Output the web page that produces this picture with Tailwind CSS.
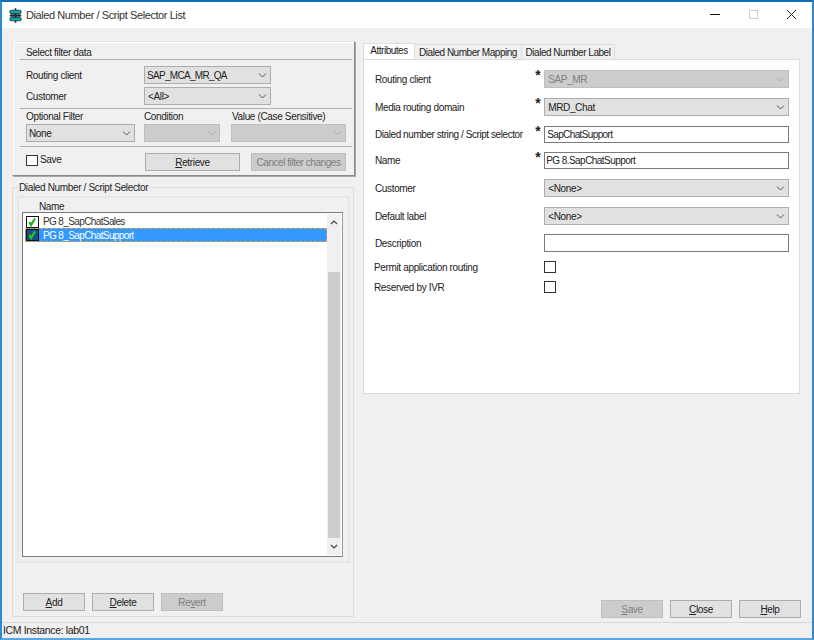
<!DOCTYPE html>
<html lang="en">
  <head>
    <meta charset="UTF-8" />
    <title>Dialed Number / Script Selector List</title>
    <script src="https://cdn.jsdelivr.net/npm/@tailwindcss/browser@4"></script>
  </head>
  <body class="w-[814px] h-[640px] overflow-hidden bg-[#f0f0f0] font-['Liberation_Sans',sans-serif] text-[10px] tracking-[-0.35px] whitespace-nowrap text-[#222]">
    <div class="w-[814px] h-[640px] flex flex-col border-x-2 border-b-2 border-t-2 border-x-[#2b8ad6] border-b-[#5aa6e0] border-t-[#0f6cb5]">
      <!-- title bar -->
      <div class="h-[26px] shrink-0 bg-white flex items-center pl-[7px]">
        <svg width="13" height="15" viewBox="0 0 16 18">
          <rect x="7" y="0" width="2" height="18" fill="#0d3b4a" />
          <rect x="1" y="2.5" width="14" height="4" rx="1.5" fill="#12a5a0" stroke="#0d3b4a" />
          <rect x="1" y="7.5" width="14" height="3" rx="1.5" fill="#1d2b3a" />
          <rect x="1" y="11.5" width="14" height="4" rx="1.5" fill="#12a5a0" stroke="#0d3b4a" />
        </svg>
        <span class="ml-[4px] text-[11px] tracking-[-0.42px] text-[#333]">Dialed Number / Script Selector List</span>
        <div class="ml-auto flex items-center">
          <svg width="38" height="14" viewBox="0 0 38 14"><rect x="14" y="6" width="10" height="1" fill="#111" /></svg>
          <svg width="38" height="14" viewBox="0 0 38 14"><rect x="15.500" y="2.500" width="8" height="8" fill="none" stroke="#d0d0d0" /></svg>
          <svg width="40" height="14" viewBox="0 0 40 14"><path d="M15 2l9 9M24 2l-9 9" stroke="#222" fill="none" /></svg>
        </div>
      </div>

      <div class="flex-1 flex min-h-0">
        <!-- left column -->
        <div class="w-[343px] ml-[10px] mt-[13px] shrink-0">
          <div class="h-[135px] border border-t-[#e8e8e8] border-l-[#e8e8e8] border-r-[#8a8a8a] border-b-[#8a8a8a] shadow-[inset_1px_1px_0_#fff,1px_1px_0_#a8a8a8] pt-[3px]">
            <div class="pl-[13px] h-[14px] leading-[16px]">Select filter data</div>
            <div class="h-px bg-[#b0b0b0] ml-[7px] mr-[2px]"></div>
            <div class="flex items-center h-[18px] mt-[6px] pl-[13px]">
              <span class="w-[118px]">Routing client</span>
              <div class="w-[127px] h-[18px] bg-[#e1e1e1] border border-[#adadad] flex items-center justify-between pl-[2px] pr-[3px]">
                <span class="tracking-[-0.7px]">SAP_MCA_MR_QA</span>
                <svg width="9" height="5" viewBox="0 0 9 5"><path d="M1 .5l3.500 3.500 3.500-3.500" fill="none" stroke="#555" /></svg>
              </div>
            </div>
            <div class="flex items-center h-[18px] mt-[3px] pl-[13px]">
              <span class="w-[118px]">Customer</span>
              <div class="w-[127px] h-[18px] bg-[#e1e1e1] border border-[#adadad] flex items-center justify-between pl-[3px] pr-[3px]">
                <span>&lt;All&gt;</span>
                <svg width="9" height="5" viewBox="0 0 9 5"><path d="M1 .5l3.500 3.500 3.500-3.500" fill="none" stroke="#555" /></svg>
              </div>
            </div>
            <div class="h-px bg-[#b0b0b0] ml-[7px] mr-[2px] mt-[3px]"></div>
            <div class="flex pl-[13px] h-[13px] leading-[15px]">
              <span class="w-[118px]">Optional Filter</span>
              <span class="w-[88px]">Condition</span>
              <span>Value (Case Sensitive)</span>
            </div>
            <div class="flex pl-[13px] h-[18px] mt-[2px]">
              <div class="w-[109px] bg-[#e1e1e1] border border-[#adadad] flex items-center justify-between pl-[2px] pr-[3px]">
                <span>None</span>
                <svg width="9" height="5" viewBox="0 0 9 5"><path d="M1 .5l3.500 3.500 3.500-3.500" fill="none" stroke="#555" /></svg>
              </div>
              <div class="w-[76px] ml-[9px] bg-[#cccccc] border border-[#bfbfbf] flex items-center justify-end pr-[3px]">
                <svg width="9" height="5" viewBox="0 0 9 5"><path d="M1 .5l3.500 3.500 3.500-3.500" fill="none" stroke="#aaa" /></svg>
              </div>
              <div class="w-[115px] ml-[11px] bg-[#cccccc] border border-[#bfbfbf] flex items-center justify-end pr-[3px]">
                <svg width="9" height="5" viewBox="0 0 9 5"><path d="M1 .5l3.500 3.500 3.500-3.500" fill="none" stroke="#aaa" /></svg>
              </div>
            </div>
            <div class="h-px bg-[#b0b0b0] ml-[7px] mr-[2px] mt-[4px]"></div>
            <div class="flex pl-[13px] mt-[6px] h-[18px]">
              <div class="w-[119px] flex items-start">
                <span class="w-[12px] h-[11px] mt-[2px] bg-white border border-[#333]"></span>
                <span class="ml-[2px] leading-[14px]">Save</span>
              </div>
              <div class="w-[95px] bg-[#e1e1e1] border border-[#adadad] flex items-center justify-center"><span><u>R</u>etrieve</span></div>
              <div class="w-[95px] ml-[11px] bg-[#cccccc] border border-[#bfbfbf] text-[#7f7f7f] tracking-[-0.45px] flex items-center justify-center">Cancel filter changes</div>
            </div>
          </div>

          <fieldset class="mt-[4px] h-[437px] border border-[#dcdcdc] w-[342px] pl-[4px] pr-[3px]">
            <legend class="ml-[1px] px-px h-[14px] leading-[16px]">Dialed Number / Script Selector</legend>
            <div class="h-[367px] mt-[2px] border-2 border-[#e6e6e6] pl-[3px] pr-[5px] pt-[2px]">
              <div class="pl-[17px] h-[12px] leading-[14px]">Name</div>
              <div class="h-[345px] w-[321px] border border-[#7a7a7a] border-r-[#999] bg-white flex pt-[2px] pl-[2px] pr-px tracking-[-0.62px]">
                <div class="flex-1">
                  <div class="h-[13px] flex items-center">
                    <svg class="ml-px" width="13" height="12" viewBox="0 0 13 12"><rect x=".5" y=".5" width="12" height="11" fill="#fff" stroke="#111" /><path d="M3.500 6l1.500 3 4-6.500" fill="none" stroke="#16b516" stroke-width="2.200" /></svg>
                    <span class="ml-[4px] text-[#333]">PG 8_SapChatSales</span>
                  </div>
                  <div class="h-[14px] flex items-center bg-[#3399ff] text-white border border-dashed border-[#d9a04a]">
                    <svg width="13" height="12" viewBox="0 0 13 12"><rect x=".5" y=".5" width="12" height="11" fill="#1a4d80" stroke="#111" /><path d="M3.500 6l1.500 3 4-6.500" fill="none" stroke="#22d022" stroke-width="2.200" /></svg>
                    <span class="ml-[4px]">PG 8_SapChatSupport</span>
                  </div>
                </div>
                <div class="w-[14px] -mt-[1px] mb-px bg-[#f0f0f0] flex flex-col">
                  <div class="h-[17px] flex items-center justify-center">
                    <svg width="8" height="5" viewBox="0 0 8 5"><path d="M1 4l3-3 3 3" fill="none" stroke="#444" stroke-width="1.200" /></svg>
                  </div>
                  <div class="h-[41px]"></div>
                  <div class="flex-1 mx-px bg-[#cdcdcd]"></div>
                  <div class="h-[17px] flex items-center justify-center">
                    <svg width="8" height="5" viewBox="0 0 8 5"><path d="M1 1l3 3 3-3" fill="none" stroke="#444" stroke-width="1.200" /></svg>
                  </div>
                </div>
              </div>
            </div>
            <div class="flex mt-[30px] pl-[6px] gap-[7px] h-[18px]">
              <div class="w-[62px] bg-[#e1e1e1] border border-[#adadad] flex items-center justify-center"><span><u>A</u>dd</span></div>
              <div class="w-[62px] bg-[#e1e1e1] border border-[#adadad] flex items-center justify-center"><span><u>D</u>elete</span></div>
              <div class="w-[62px] bg-[#cccccc] border border-[#bfbfbf] text-[#7f7f7f] flex items-center justify-center"><span>Re<u>v</u>ert</span></div>
            </div>
          </fieldset>
        </div>

        <!-- right column -->
        <div class="ml-[8px] mt-[15px] w-[437px] flex flex-col">
          <div class="flex h-[16px] items-end tracking-[-0.48px]">
            <div class="h-[16px] w-[52px] bg-white border-t border-x border-[#dcdcdc] flex items-start justify-center leading-[13px]">Attributes</div>
            <div class="h-[15px] w-[107px] bg-[#f0f0f0] border-t border-r border-[#dcdcdc] flex items-center justify-center">Dialed Number Mapping</div>
            <div class="h-[15px] w-[93px] bg-[#f0f0f0] border-t border-r border-[#dcdcdc] flex items-center justify-center">Dialed Number Label</div>
          </div>
          <div class="h-[335px] bg-white border border-[#dcdcdc] pl-[11px] pr-[10px] pt-[10px]">
            <div class="flex items-center h-[18px]">
              <span class="w-[161px]">Routing client</span>
              <span class="w-[9px] text-[14px] font-bold leading-[10px] h-[10px] self-start">*</span>
              <div class="w-[246px] h-[18px] bg-[#cccccc] border border-[#bfbfbf] flex items-center justify-between pl-[3px] pr-[3px] text-[#7f7f7f]">
                <span>SAP_MR</span>
                <svg width="9" height="5" viewBox="0 0 9 5"><path d="M1 .5l3.500 3.500 3.500-3.500" fill="none" stroke="#aaa" /></svg>
              </div>
            </div>
            <div class="flex items-center h-[18px] mt-[10px]">
              <span class="w-[161px]">Media routing domain</span>
              <span class="w-[9px] text-[14px] font-bold leading-[10px] h-[10px] self-start">*</span>
              <div class="w-[246px] h-[18px] bg-[#e1e1e1] border border-[#adadad] flex items-center justify-between pl-[3px] pr-[3px]">
                <span>MRD_Chat</span>
                <svg width="9" height="5" viewBox="0 0 9 5"><path d="M1 .5l3.500 3.500 3.500-3.500" fill="none" stroke="#555" /></svg>
              </div>
            </div>
            <div class="flex items-center h-[17px] mt-[10px]">
              <span class="w-[161px] tracking-[-0.43px]">Dialed number string / Script selector</span>
              <span class="w-[9px] text-[14px] font-bold leading-[10px] h-[10px] self-start">*</span>
              <div class="w-[246px] h-[17px] bg-white border border-[#7a7a7a] flex items-center pl-[2px] tracking-[-0.62px]">SapChatSupport</div>
            </div>
            <div class="flex items-center h-[17px] mt-[9px]">
              <span class="w-[161px]">Name</span>
              <span class="w-[9px] text-[14px] font-bold leading-[10px] h-[10px] self-start">*</span>
              <div class="w-[246px] h-[17px] bg-white border border-[#7a7a7a] flex items-center pl-[1px] tracking-[-0.55px]">PG 8.SapChatSupport</div>
            </div>
            <div class="flex items-center h-[18px] mt-[10px]">
              <span class="w-[170px]">Customer</span>
              <div class="w-[246px] h-[18px] bg-[#e1e1e1] border border-[#adadad] flex items-center justify-between pl-[3px] pr-[3px]">
                <span>&lt;None&gt;</span>
                <svg width="9" height="5" viewBox="0 0 9 5"><path d="M1 .5l3.500 3.500 3.500-3.500" fill="none" stroke="#555" /></svg>
              </div>
            </div>
            <div class="flex items-center h-[18px] mt-[10px]">
              <span class="w-[170px]">Default label</span>
              <div class="w-[246px] h-[18px] bg-[#e1e1e1] border border-[#adadad] flex items-center justify-between pl-[3px] pr-[3px]">
                <span>&lt;None&gt;</span>
                <svg width="9" height="5" viewBox="0 0 9 5"><path d="M1 .5l3.500 3.500 3.500-3.500" fill="none" stroke="#555" /></svg>
              </div>
            </div>
            <div class="flex items-center h-[18px] mt-[9px]">
              <span class="w-[170px]">Description</span>
              <div class="w-[246px] h-[18px] bg-white border border-[#7a7a7a]"></div>
            </div>
            <div class="flex items-center h-[12px] mt-[9px] -ml-[1px]">
              <span class="w-[170px]">Permit application routing</span>
              <span class="w-[12px] h-[12px] bg-white border border-[#333]"></span>
            </div>
            <div class="flex items-center h-[12px] mt-[8px] -ml-[1px]">
              <span class="w-[170px]">Reserved by IVR</span>
              <span class="w-[12px] h-[12px] bg-white border border-[#333]"></span>
            </div>
          </div>
          <div class="flex justify-end gap-[7px] mt-[206px] h-[18px] -mr-[1px]">
            <div class="w-[62px] bg-[#cccccc] border border-[#bfbfbf] text-[#7f7f7f] flex items-center justify-center"><span><u>S</u>ave</span></div>
            <div class="w-[62px] bg-[#e1e1e1] border border-[#adadad] flex items-center justify-center"><span><u>C</u>lose</span></div>
            <div class="w-[62px] bg-[#e1e1e1] border border-[#adadad] flex items-center justify-center"><span><u>H</u>elp</span></div>
          </div>
        </div>
      </div>

      <!-- status bar -->
      <div class="h-[16px] shrink-0 border-t border-[#d8d8d8] pl-px leading-[15px] text-[10.5px] tracking-[-0.35px]">ICM Instance: lab01</div>
    </div>
  </body>
</html>
